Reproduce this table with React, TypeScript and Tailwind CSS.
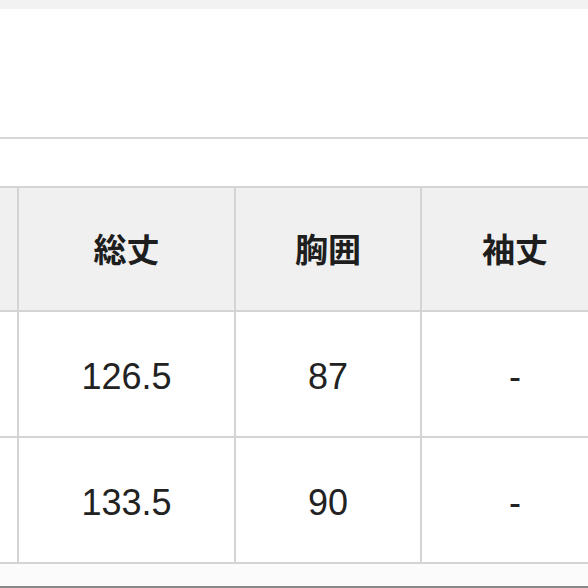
import React from "react";

const headers = ["", "総丈", "胸囲", "袖丈"];
const rows = [
  ["", "126.5", "87", "-"],
  ["", "133.5", "90", "-"],
];

export default function App() {
  return (
    <div className="w-[588px] h-[588px] overflow-hidden bg-white flex flex-col">
      <div className="h-[9px] bg-[#f2f2f2] shrink-0" />
      <div className="h-[128px] shrink-0" />
      <div className="h-[2px] bg-[#d6d6d6] shrink-0" />
      <div className="h-[47px] shrink-0" />
      <div className="w-[620px] grid grid-cols-[17px_215px_184px_186px] gap-[2px] bg-[#d4d4d4] py-[2px] shrink-0">
        {headers.map((h, i) => (
          <div
            key={"h" + i}
            className="h-[122px] bg-[#f0f0f0] flex items-center justify-center text-[33px] font-bold text-[#1e1e1e] [font-family:'Noto_Sans_CJK_JP',sans-serif]"
          >
            {h}
          </div>
        ))}
        {rows.map((r, ri) =>
          r.map((c, ci) => (
            <div
              key={ri + "-" + ci}
              className="h-[124px] bg-white flex items-center justify-center pt-[5px] text-[36px] text-[#222] [font-family:'Liberation_Sans',Arial,sans-serif]"
            >
              {c}
            </div>
          ))
        )}
      </div>
      <div className="h-[22px] bg-[#fbfbfb] shrink-0" />
      <div className="h-[2px] bg-[#8a8a8a] shrink-0" />
    </div>
  );
}
